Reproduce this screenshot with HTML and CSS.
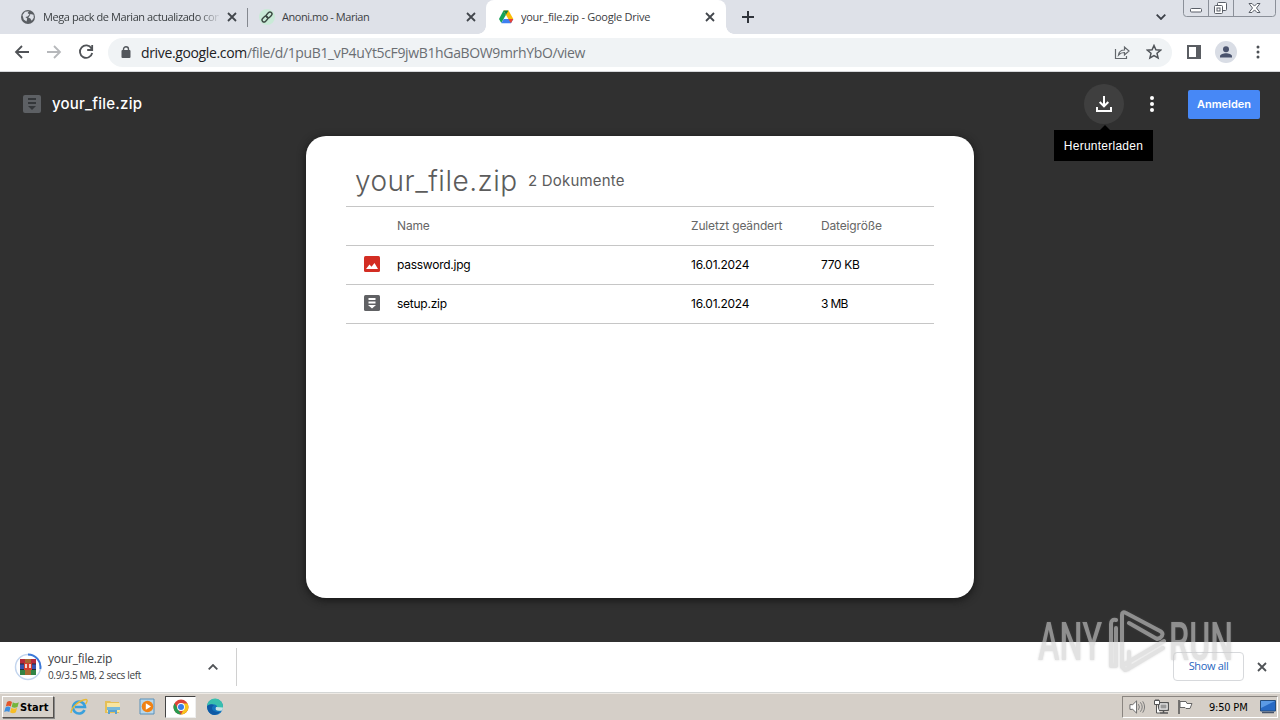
FILE: index.html
```html
<!DOCTYPE html>
<html lang="de">
<head>
<meta charset="utf-8">
<title>your_file.zip - Google Drive</title>
<link rel="stylesheet" href="styles.css">
</head>
<body>
<header class="tabstrip">
  <div class="tab tab-first">
    <svg class="favicon" viewBox="0 0 16 16"><circle cx="8" cy="8" r="7" fill="#5a5e63"/><path d="M2.5 6 5 2.8 9 2.2 7.6 4 9.5 5.5 7.5 7.5 5.3 8 7.2 9.5 6.5 12.5 3.7 10.5zM10.5 5l3 .8.3 3-2 3-1.7-2.5-1.8-.6 1.2-1.8z" fill="#dee1e8"/></svg>
    <span class="tab-title title-mega">Mega pack de Marian actualizado con</span>
    <svg class="close" viewBox="0 0 10 10"><path d="M1 1l8 8M9 1 1 9"/></svg>
  </div>
  <div class="tab tab-second">
    <svg class="favicon" viewBox="0 0 16 16"><circle cx="8" cy="8" r="8" fill="#c9ead7"/><g transform="rotate(-45 8 8)" fill="none" stroke="#3c4a43" stroke-width="1.4"><rect x="1.8" y="6" width="6.5" height="4" rx="2"/><rect x="7.7" y="6" width="6.5" height="4" rx="2"/></g></svg>
    <span class="tab-title title-anoni">Anoni.mo - Marian</span>
    <svg class="close" viewBox="0 0 10 10"><path d="M1 1l8 8M9 1 1 9"/></svg>
  </div>
  <div class="tab tab-active">
    <svg class="favicon" viewBox="0 0 16 16"><path d="M5.5 1.5 8 5.8 3.3 14 1 10z" fill="#16a358"/><path d="M5.500 1.500h5L15.300 10h-5z" fill="#fbbc05"/><path d="M5.700 10h9.600l-2.400 4.200H3.300z" fill="#3f7ff0"/><path d="M10.400 10h4.900l-2.400 4.200z" fill="#ea4335"/><path d="M5.500 1.500h5L8 5.800z" fill="#128345"/></svg>
    <span class="tab-title title-drive">your_file.zip - Google Drive</span>
    <svg class="close" viewBox="0 0 10 10"><path d="M1 1l8 8M9 1 1 9"/></svg>
  </div>
  <svg class="new-tab" viewBox="0 0 12 12"><path d="M6 0v12M0 6h12"/></svg>
  <svg class="tab-search" viewBox="0 0 10 6"><path d="M.7.7 5 5 9.300.7"/></svg>
  <div class="window-buttons">
    <svg viewBox="0 0 93 17"><path d="M.5 0v13.500q0 3 3 3h86q3 0 3-3V0M25.500 0v16M50.500 0v16" fill="none" stroke="#8b9099"/><g fill="#fff" stroke="#5a5f68"><rect x="7.500" y="8.500" width="11" height="3.500" rx="1"/><rect x="34.500" y="2.500" width="9" height="8" rx="1"/><rect x="31.500" y="5.500" width="8" height="8" rx="1"/><rect x="34" y="8" width="3" height="3"/><path d="M66 3.500h3l2.500 2.600L74 3.500h3L73.500 8l3.500 4.500h-3l-2.500-2.600L69 12.500h-3L69.500 8z"/></g></svg>
  </div>
</header>

<nav class="toolbar">
  <svg class="nav-icon back" viewBox="0 0 16 16"><path d="M15 8H2M8 2 2 8l6 6"/></svg>
  <svg class="nav-icon forward" viewBox="0 0 16 16"><path d="M1 8h13M8 2l6 6-6 6"/></svg>
  <svg class="nav-icon reload" viewBox="0 0 16 16"><path d="M13.500 4.500A6.200 6.200 0 1 0 14.200 9M14.200 1v5H9.200"/></svg>
  <div class="omnibox">
    <svg class="lock" viewBox="0 0 10 12"><rect x=".5" y="4" width="9" height="8" rx="1" fill="#53575c"/><path d="M2.500 5V3.300a2.500 2.500 0 0 1 5 0V5" fill="none" stroke="#53575c" stroke-width="1.400"/></svg>
    <span class="url"><span class="url-host">drive.google.com</span><span class="url-path">/file/d/1puB1_vP4uYt5cF9jwB1hGaBOW9mrhYbO/view</span></span>
    <svg class="share" viewBox="0 0 16 15"><path d="M1.500 4v9.500h11V11M4.500 10c.5-3.500 2.500-5 6-5V2l4.500 4-4.500 4V7.500c-2.500 0-4.500.7-6 2.500z"/></svg>
    <svg class="star" viewBox="0 0 16 16"><path d="m8 1.500 1.900 4.300 4.700.4-3.600 3.100 1.100 4.600L8 11.500l-4.100 2.400L5 9.300 1.400 6.200l4.700-.4z"/></svg>
  </div>
  <svg class="panel" viewBox="0 0 14 14"><path d="M1 1h12v12H1z" fill="none" stroke="#5a5d62" stroke-width="2"/><path d="M9 0h5v14H9z" fill="#5a5d62"/></svg>
  <svg class="avatar" viewBox="0 0 22 22"><circle cx="11" cy="11" r="11" fill="#d9dde5"/><circle cx="11" cy="8.200" r="3" fill="#4a536d"/><path d="M5 16.500v-1.300c0-2 3.500-3 6-3s6 1 6 3v1.300z" fill="#4a536d"/></svg>
  <svg class="menu" viewBox="0 0 4 14"><circle cx="2" cy="2" r="1.500"/><circle cx="2" cy="7" r="1.500"/><circle cx="2" cy="12" r="1.500"/></svg>
</nav>

<main class="viewer">
  <div class="viewer-bar">
    <svg class="zip-dim" viewBox="0 0 18 18"><rect width="18" height="18" rx="2" fill="#5d6064"/><path d="M5 3h8v2H5zM5 7h8v2H5zM5 11h8l-4 4z" fill="#34373a"/></svg>
    <h1 class="viewer-title">your_file.zip</h1>
    <div class="download-button">
      <svg viewBox="0 0 16 16"><path d="M8 0v10M3.700 6 8 10.300 12.300 6M1 11v4h14v-4"/></svg>
      <div class="tooltip"><span>Herunterladen</span></div>
    </div>
    <svg class="more" viewBox="0 0 4 16"><circle cx="2" cy="2" r="2"/><circle cx="2" cy="8" r="2"/><circle cx="2" cy="14" r="2"/></svg>
    <button class="signin"><span>Anmelden</span></button>
  </div>

  <section class="card">
    <div class="card-head"><span class="archive-name">your_file.zip</span><span class="archive-count">2 Dokumente</span></div>
    <div class="row row-head"><span></span><span class="h-name">Name</span><span class="h-date">Zuletzt geändert</span><span class="h-size">Dateigröße</span></div>
    <div class="row">
      <svg class="file-icon" viewBox="0 0 16 16"><rect width="16" height="16" rx="1.500" fill="#d32d23"/><path d="M2 13 5.500 8.500l2 2.300L10.500 7 14 13z" fill="#fff"/></svg>
      <span class="f-jpg">password.jpg</span><span class="f-date">16.01.2024</span><span class="f-kb">770 KB</span>
    </div>
    <div class="row">
      <svg class="file-icon" viewBox="0 0 16 16"><rect width="16" height="16" rx="1.500" fill="#606164"/><path d="M4.500 3h7v2h-7zM4.500 6.500h7v2h-7zM4 10h8l-4 3.500z" fill="#fff"/></svg>
      <span class="f-zip">setup.zip</span><span class="f-date">16.01.2024</span><span class="f-mb">3 MB</span>
    </div>
  </section>
</main>

<section class="downloads">
  <svg class="progress" viewBox="0 0 28 28"><circle cx="14" cy="14" r="12.500" fill="#fff" stroke="#c3d5ee" stroke-width="1.500"/><path d="M14 1.500A12.500 12.500 0 0 1 26.300 16" fill="none" stroke="#3b78d8" stroke-width="2"/><path d="M6 6h16v5H6z" fill="#b52b3c"/><path d="M6 11h16v5.500H6z" fill="#3a54b0"/><path d="M6 16.500h16V22H6z" fill="#338445"/><path d="M6 11h16M6 16.500h16" stroke="#222a3a"/><path d="M11 6h6v16h-6z" fill="#a96832"/><path d="M10 10h8v7h-8z" fill="#d33c2e"/><path d="M12 11v4M16 11v4" stroke="#fff" stroke-width="1.500"/></svg>
  <div class="download-info"><span class="dl-name">your_file.zip</span><span class="dl-state">0.9/3.5 MB, 2 secs left</span></div>
  <svg class="chevron" viewBox="0 0 10 6"><path d="M.7 5.300 5 1l4.300 4.300"/></svg>
  <div class="divider"></div>
  <button class="show-all"><span>Show all</span></button>
  <svg class="close bar-close" viewBox="0 0 10 10"><path d="M1 1l8 8M9 1 1 9"/></svg>
</section>

<footer class="taskbar">
  <div class="start">
    <svg viewBox="0 0 16 16"><path d="M3 3q2.500-2 5 0L6.800 7.500q-2.600-1.700-5 0z" fill="#e3562a"/><path d="M8.800 3.300q2.700 1.700 6 0L13.500 8q-3 1.600-5.800 0z" fill="#74b53b"/><path d="M1.500 8.400q2.500-1.700 5 0L5.300 13Q3 11.300.2 13z" fill="#3d8fe0"/><path d="M7.400 8.800q2.800 1.700 5.700 0L11.900 13.300q-2.900 1.700-5.800 0z" fill="#f7bd25"/></svg>
    <span>Start</span>
  </div>
  <svg class="task ie" viewBox="0 0 18 18"><path d="M14.500 12A6 6 0 1 1 15 9H5" fill="none" stroke="#39a0dc" stroke-width="2.600"/><path d="M1 15C1 10 9 2 16 1.500c2 0 1 3-.5 4.500" fill="none" stroke="#e9b931" stroke-width="1.300"/></svg>
  <svg class="task folder" viewBox="0 0 18 18"><path d="M1 3h5l1 1h8v11H1z" fill="#e5bf57"/><path d="M3 5h13v9H3z" fill="#f8e5a0"/><path d="M3 9h13v3H3z" fill="#78b9d9"/><path d="M4 16v-4h9v4h-2v-2H6v2z" fill="#5ba3cf"/></svg>
  <svg class="task player" viewBox="0 0 18 18"><path d="M1 1h14v15H1z" fill="#b8d7eb" stroke="#5a91b9"/><circle cx="8.500" cy="8.500" r="5.800" fill="#f08214"/><path d="M6.800 5.300 12 8.500l-5.200 3.200z" fill="#fff"/></svg>
  <div class="task-active"><svg viewBox="0 0 16 16"><circle cx="8" cy="8" r="7.500" fill="#dd4438"/><path d="M1.500 4.200 5.500 11 8 15.500A7.500 7.500 0 0 1 1.500 4.200z" fill="#279b50"/><path d="M8 4.500h6.600A7.500 7.500 0 0 1 8 15.500L11.300 9z" fill="#f8c51c"/><circle cx="8" cy="8" r="3.900" fill="#fff"/><circle cx="8" cy="8" r="3" fill="#387ee8"/></svg></div>
  <svg class="task edge" viewBox="0 0 18 18"><circle cx="9" cy="9" r="8" fill="#1575bd"/><path d="M1 8a8 8 0 0 1 16 1q0 4-4.500 3.500c-2-.2-2-1.300-1.300-2.300Q11.500 6.500 7 6.300 3 6.500 1 8z" fill="#38bfae"/><path d="M1 8q4-3 7-.5c-4 1.500-2 7 6 6.500Q10 18.500 5 16 1 13 1 8z" fill="#0e59a5"/><path d="M10 9q-2 5 6.500 3.500l.5-3z" fill="#c9e3e7"/></svg>
  <div class="tray">
    <svg class="speaker" viewBox="0 0 18 16"><path d="M1 5.500h3l4-4v13l-4-4H1z" fill="#fff" stroke="#666"/><path d="M10 5q2 3 0 6M12 3q4 5 0 10M14.500 2q4 6 0 12" fill="none" stroke="#777"/></svg>
    <svg class="network" viewBox="0 0 18 16"><path d="M5.500 3.500h10v8h-10z" fill="#aaa" stroke="#555"/><path d="M7 5h7v5H7z" fill="#999" stroke="#eee"/><path d="M7 14h8M10.500 12v2" stroke="#555" stroke-width="1.500"/><path d="M1.500 1.500h5v4h-5zM3 0v2M5 0v2M3.500 5.500V14H7" fill="#fff" stroke="#555"/></svg>
    <svg class="flag" viewBox="0 0 18 16"><path d="M2 1v14" stroke="#555" stroke-width="1.500"/><path d="M3 2.500h6l1 2h5l-2 5H9l-1-1H3z" fill="#fff" stroke="#666"/></svg>
    <span class="clock">9:50 PM</span>
    <svg class="desktop" viewBox="0 0 16 14"><path d="M.5.500h15v10.500H.5z" fill="#286ac4" stroke="#254d7d"/><path d="M1 1h14L1 8z" fill="#5b9ae5"/><path d="M2 12.500h12" stroke="#45536a" stroke-width="1.500"/></svg>
  </div>
</footer>

<svg class="watermark" viewBox="0 0 200 70">
  <g class="mark-text"><text x="1" y="53" textLength="64" lengthAdjust="spacingAndGlyphs">ANY</text><text x="132" y="53" textLength="64" lengthAdjust="spacingAndGlyphs">RUN</text></g>
  <path class="mark-lines" d="M79 13q-5-1-5 4v42h5V21M85 60V8q0-4 4-2l34 18q5 3 0 7l-3 1-28-16M92 45v14M127 34 88 57q-5 3 0 6l3-1 35-21"/>
</svg>
</body>
</html>
```

FILE: styles.css
```css
* { box-sizing: border-box; }
body { margin: 0; width: 1280px; height: 720px; overflow: hidden; position: relative; display: flex; flex-direction: column; background: #303030; font-family: "Open Sans", "Noto Sans", sans-serif; color: #3c4043; }
svg { display: block; flex: none; }
span { white-space: nowrap; }

.tabstrip { height: 34px; display: flex; align-items: center; background: #dee1e8; flex: none; }
.tab { height: 34px; display: flex; align-items: center; }
.tab-first { width: 247px; padding-left: 20px; }
.tab-second { width: 239px; padding-left: 12px; background: linear-gradient(#84888f, #84888f) 0 8px / 1px 19px no-repeat; }
.tab-active { width: 240px; padding-left: 12px; background: #fff; border-radius: 8px 8px 0 0; position: relative; }
.tab-active::before, .tab-active::after { content: ""; position: absolute; bottom: 0; width: 8px; height: 8px; }
.tab-active::before { left: -8px; background: radial-gradient(circle at 0 0, transparent 7.500px, #fff 8px); }
.tab-active::after { right: -8px; background: radial-gradient(circle at 100% 0, transparent 7.500px, #fff 8px); }
.favicon { width: 16px; height: 16px; margin-right: 7px; }
.tab-title { width: 176px; overflow: hidden; font-size: 11px; line-height: 16px; }
.title-mega { letter-spacing: -.42px; -webkit-mask-image: linear-gradient(90deg, #000 155px, transparent 178px); mask-image: linear-gradient(90deg, #000 155px, transparent 178px); }
.title-anoni { letter-spacing: -.45px; }
.title-drive { letter-spacing: -.26px; }
.close { width: 10px; height: 10px; margin-left: 8px; fill: none; stroke: #42464c; stroke-width: 1.800; }
.new-tab { width: 12px; height: 12px; margin-left: 16px; fill: none; stroke: #30343b; stroke-width: 2; }
.tab-search { width: 10px; height: 6px; margin-left: 402px; fill: none; stroke: #3c4048; stroke-width: 1.800; }
.window-buttons { width: 93px; height: 17px; margin-left: 17px; align-self: flex-start; }
.window-buttons svg { width: 93px; height: 17px; }

.toolbar { height: 38px; flex: none; display: flex; align-items: center; padding: 0 0 1px 14px; background: #fff; border-bottom: 1px solid #d5d7da; }
.nav-icon { width: 16px; height: 16px; margin-right: 16px; fill: none; stroke: #505357; stroke-width: 1.800; }
.forward { stroke: #b6b8bb; }
.reload { margin-right: 14px; }
.omnibox { width: 1064px; height: 29px; display: flex; align-items: center; border-radius: 15px; background: #f0f3f5; padding-left: 13px; }
.lock { width: 10px; height: 12px; margin-right: 10px; }
.url { font-size: 14px; width: 973px; line-height: 20px; letter-spacing: -.355px; padding-top: 1px; }
.url-host { color: #202124; }
.url-path { color: #6a6e73; }
.share { width: 16px; height: 15px; fill: none; stroke: #63676c; stroke-width: 1.200; }
.star { width: 16px; height: 16px; margin-left: 16px; fill: none; stroke: #505459; stroke-width: 1.500; }
.panel { width: 14px; height: 14px; margin-left: 15px; }
.avatar { width: 22px; height: 22px; margin-left: 14px; }
.menu { width: 4px; height: 14px; margin-left: 19px; fill: #4c5055; }

.viewer { height: 570px; flex: none; background: #303030; }
.viewer-bar { height: 64px; display: flex; align-items: center; padding-left: 23px; }
.zip-dim { width: 18px; height: 18px; }
.viewer-title { margin: 0 0 0 11px; width: 1032px; color: #fff; font-size: 15px; font-weight: 500; line-height: 20px; letter-spacing: .22px; }
.viewer-title, .archive-name, .archive-count, .row, .signin { font-family: Inter, "Open Sans", sans-serif; }
.download-button { width: 40px; height: 40px; border-radius: 50%; background: #3f3f3f; display: flex; align-items: center; justify-content: center; position: relative; }
.download-button svg { width: 16px; height: 16px; fill: none; stroke: #fff; stroke-width: 2; }
.tooltip { position: absolute; z-index: 2; left: -30px; top: 46px; width: 99px; height: 31px; background: #000; color: #fff; display: flex; align-items: center; justify-content: center; font: 12px/16px "Liberation Sans", sans-serif; letter-spacing: .25px; }
.tooltip::before { content: ""; position: absolute; left: 45px; top: -5px; border: 6px solid transparent; border-top: 0; border-bottom-color: #000; }
.more { width: 4px; height: 16px; margin-left: 26px; fill: #fff; }
.signin { width: 72px; height: 29px; margin-left: 34px; padding: 0; border: 0; border-radius: 2px; background: #4788f6; color: #fff; font-size: 11px; font-weight: 600; }

.card { width: 668px; height: 462px; margin: 0 auto; padding: 22px 40px 0; background: #fff; border-radius: 20px; box-shadow: 0 2px 8px #151515; }
.card-head { height: 49px; padding: 0 0 3px 9px; display: flex; align-items: center; gap: 10px; border-bottom: 1px solid #c6c6c6; color: #5c5c5c; }
.archive-name { width: 163px; font-size: 28px; font-weight: 300; line-height: 36px; letter-spacing: .5px; }
.archive-count { font-size: 15px; letter-spacing: .2px; padding-bottom: 1px; }
.row { height: 39px; display: grid; grid-template-columns: 51px 294px 130px 1fr; align-items: center; padding-bottom: 2px; border-bottom: 1px solid #c6c6c6; font-size: 12px; color: #000; letter-spacing: -.25px; }
.row-head { color: #666; letter-spacing: -.15px; }
.f-mb { letter-spacing: -.7px; }
.f-kb { letter-spacing: -.35px; }
.file-icon { width: 16px; height: 16px; margin-left: 18px; }

.downloads { height: 51px; flex: none; display: flex; align-items: center; background: #fff; border-bottom: 1px solid #d4d6d5; padding-left: 14px; }
.progress { width: 28px; height: 28px; }
.download-info { width: 156px; margin-left: 6px; display: flex; flex-direction: column; }
.dl-name { font-size: 12px; line-height: 16px; letter-spacing: -.2px; }
.dl-state { font-size: 10px; line-height: 16px; letter-spacing: -.35px; }
.chevron { width: 10px; height: 6px; margin-left: 4px; fill: none; stroke: #505357; stroke-width: 1.800; }
.divider { width: 1px; height: 38px; margin-left: 18px; background: #d0d0d0; }
.show-all { width: 71px; height: 29px; margin: 0 0 2px 936px; padding: 0 0 2px; border: 1px solid #d7d9dc; border-radius: 4px; background: #fff; color: #2866c0; font: 11px "Open Sans", sans-serif; letter-spacing: -.35px; }
.bar-close { margin-left: 13px; stroke: #4f5256; }

.taskbar { height: 27px; flex: none; display: flex; align-items: center; background: #d5cfc8; border-top: 1px solid #eeeae5; padding-left: 2px; color: #000; }
.start { width: 52px; height: 22px; display: flex; align-items: center; border: 1px solid; border-color: #fff #55514d #55514d #fff; box-shadow: 1px 1px #888; padding-left: 1px; }
.start svg { width: 16px; height: 16px; }
.start span { font: bold 11px "DejaVu Sans Condensed", "DejaVu Sans", sans-serif; letter-spacing: .1px; }
.task { width: 18px; height: 18px; }
.ie { margin-left: 16px; }
.folder { margin-left: 16px; }
.player { margin-left: 17px; }
.task-active { width: 31px; height: 22px; margin-left: 8px; display: flex; justify-content: center; align-items: center; background: #fff; border: 1px solid; border-color: #444 #eee #eee #444; }
.task-active svg { width: 16px; height: 16px; }
.edge { margin-left: 10px; }
.tray { width: 156px; height: 22px; margin-left: 898px; display: flex; align-items: center; border: 1px solid; border-color: #8a8580 #fff #fff #8a8580; padding-left: 6px; }
.speaker { width: 17px; height: 16px; }
.network { width: 18px; height: 16px; margin-left: 7px; }
.flag { width: 18px; height: 16px; margin-left: 6px; }
.clock { width: 40px; margin-left: 14px; font: 11px "DejaVu Sans Condensed", "DejaVu Sans", sans-serif; letter-spacing: -.2px; }
.desktop { width: 16px; height: 14px; margin-left: 11px; }

.watermark { position: absolute; left: 1037px; top: 607px; width: 200px; height: 70px; pointer-events: none; opacity: .6; filter: drop-shadow(0 0 1px rgba(120,120,120,.45)); }
.mark-text { font: 500 53px Roboto, sans-serif; fill: #cfcfcf; }
.mark-lines { fill: none; stroke: #cfcfcf; stroke-width: 4; stroke-linejoin: round; stroke-linecap: round; }
```
